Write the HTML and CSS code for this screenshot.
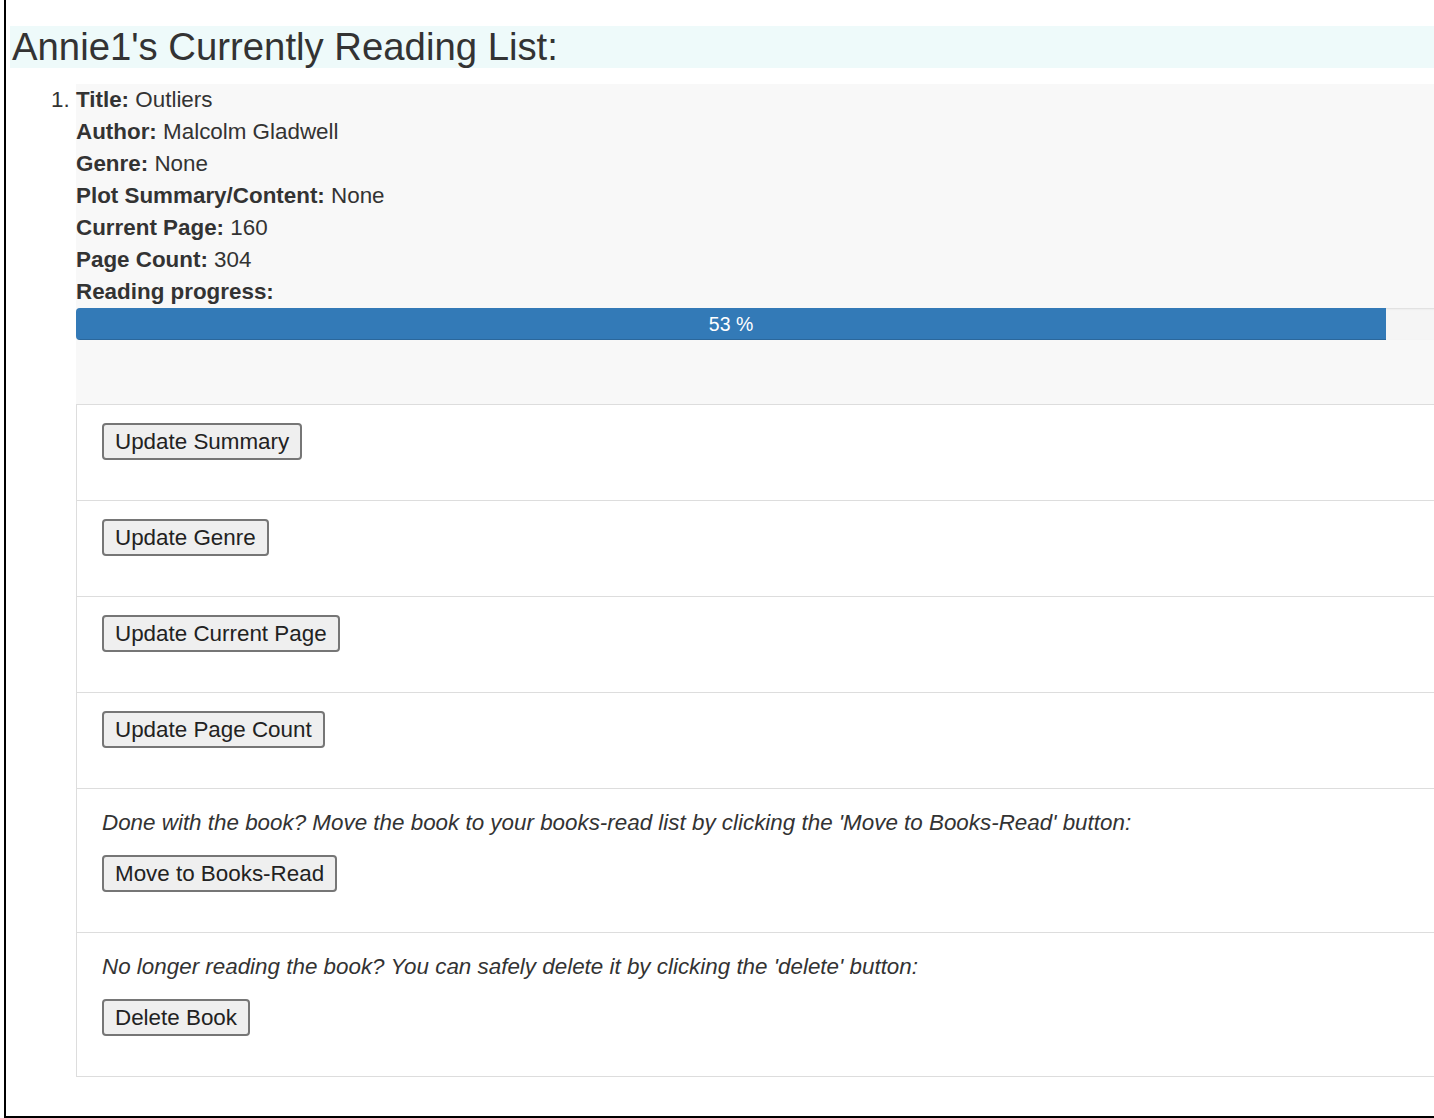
FILE: index.html
```html
<!DOCTYPE html>
<html lang="en">
<head>
<meta charset="utf-8">
<title>Currently Reading</title>
<link rel="stylesheet" href="styles.css">
</head>
<body>
<div class="page">
  <h1 class="page-title">Annie1's Currently Reading List:</h1>
  <ol class="book-list">
    <li class="book">
      <div class="book-info">
        <div class="field"><b>Title:</b> Outliers</div>
        <div class="field"><b>Author:</b> Malcolm Gladwell</div>
        <div class="field"><b>Genre:</b> None</div>
        <div class="field"><b>Plot Summary/Content:</b> None</div>
        <div class="field"><b>Current Page:</b> 160</div>
        <div class="field"><b>Page Count:</b> 304</div>
        <div class="field"><b>Reading progress:</b></div>
        <div class="progress">
          <div class="progress-bar" style="width: 53%">53 %</div>
        </div>
      </div>
      <div class="actions">
        <div class="action"><button class="btn">Update Summary</button></div>
        <div class="action"><button class="btn">Update Genre</button></div>
        <div class="action"><button class="btn">Update Current Page</button></div>
        <div class="action"><button class="btn">Update Page Count</button></div>
        <div class="action">
          <p class="note">Done with the book? Move the book to your books-read list by clicking the 'Move to Books-Read' button:</p>
          <button class="btn">Move to Books-Read</button>
        </div>
        <div class="action">
          <p class="note">No longer reading the book? You can safely delete it by clicking the 'delete' button:</p>
          <button class="btn">Delete Book</button>
        </div>
      </div>
    </li>
  </ol>
</div>
</body>
</html>
```

FILE: styles.css
```css
html, body {
  margin: 0;
  padding: 0;
  overflow: hidden;
  background: #fff;
}

body {
  font-family: "Liberation Sans", Arial, Helvetica, sans-serif;
  color: #333;
  font-size: 22.4px;
}

.page {
  margin-left: 4px;
  border-left: 2px solid #000;
  border-bottom: 2px solid #000;
  padding: 26px 0 0 4px;
  overflow: hidden;
}

.page-title {
  margin: 0;
  font-size: 38.3px;
  font-weight: normal;
  line-height: 42px;
  background: #eefafa;
  color: #333;
  padding-left: 2px;
}

.book-list {
  margin: 16px 0 39px 0;
  padding-left: 66px;
  width: 2472px;
}

.book {
  font-size: 22.4px;
  line-height: 32px;
}

.book-info {
  background: #f8f8f8;
  padding-bottom: 64px;
}

.field b {
  font-weight: bold;
}

.progress {
  height: 32px;
  background: #f5f5f5;
  border-radius: 4px;
  box-shadow: inset 0 1px 2px rgba(0, 0, 0, 0.1);
  overflow: hidden;
}

.progress-bar {
  height: 32px;
  background: #337ab7;
  color: #fff;
  font-size: 19.5px;
  line-height: 32px;
  text-align: center;
  box-shadow: inset 0 -1px 0 rgba(0, 0, 0, 0.15);
}

.actions {
  border-left: 1px solid #ddd;
  border-top: 1px solid #ddd;
}

.action {
  border-bottom: 1px solid #ddd;
  padding: 18px 25px 40px;
}

.note {
  margin: 0 0 16px;
  font-style: italic;
  line-height: 32px;
}

.btn {
  display: block;
  font-family: "Liberation Sans", Arial, Helvetica, sans-serif;
  font-size: 22.4px;
  line-height: 25px;
  color: #222;
  background: #efefef;
  border: 2px solid #767676;
  border-radius: 4px;
  padding: 4px 11px;
  height: 37px;
}
```
